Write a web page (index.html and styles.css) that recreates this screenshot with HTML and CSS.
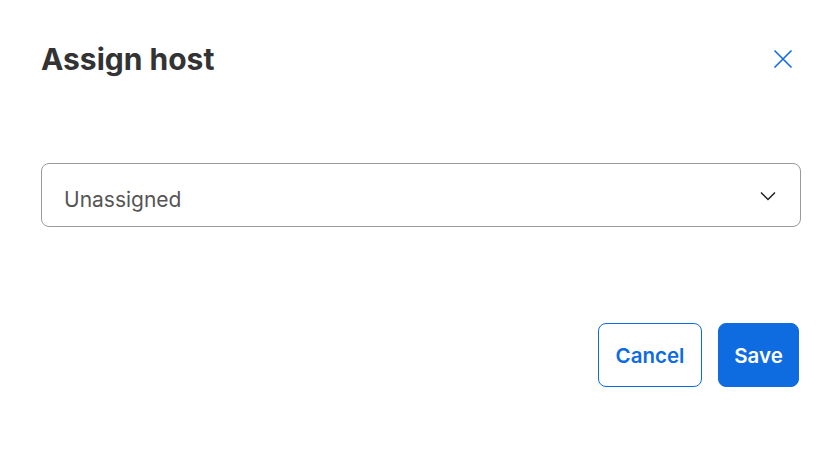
FILE: index.html
```html
<!DOCTYPE html>
<html lang="en">
<head>
    <meta charset="UTF-8">
    <meta name="viewport" content="width=device-width, initial-scale=1.0">
    <title>Assign host</title>
    <link rel="stylesheet" href="styles.css">
</head>
<body>
    <div class="dialog">
        <div class="dialog-header">
            <h2 class="dialog-title">Assign host</h2>
            <button class="close-btn" aria-label="Close">
                <svg width="20" height="20" viewBox="0 0 20 20">
                    <path d="M1.5 1.5 L18.5 18.5 M18.5 1.5 L1.5 18.5" stroke="#0e6be0" stroke-width="1.6" fill="none"/>
                </svg>
            </button>
        </div>

        <div class="select">
            <span class="select-value">Unassigned</span>
            <svg class="chevron" width="16" height="10" viewBox="0 0 16 10">
                <path d="M1 1.5 L8 8.5 L15 1.5" stroke="#222" stroke-width="1.5" fill="none"/>
            </svg>
        </div>

        <div class="dialog-footer">
            <button class="btn btn-outline">Cancel</button>
            <button class="btn btn-primary">Save</button>
        </div>
    </div>
</body>
</html>
```

FILE: styles.css
```css
body {
    margin: 0;
    background-color: #fff;
    font-family: Inter, "Noto Sans", sans-serif;
}

.dialog {
    padding: 38px 33px 0 41px;
}

.dialog-header {
    display: flex;
    justify-content: space-between;
    align-items: center;
}

.dialog-title {
    margin: 0;
    font-size: 30px;
    line-height: 42px;
    font-weight: 700;
    color: #333;
}

.close-btn {
    background: none;
    border: none;
    padding: 0;
    margin-right: 8px;
    width: 20px;
    height: 20px;
    cursor: pointer;
}

.close-btn svg {
    display: block;
}

.select {
    margin-top: 83px;
    height: 62px;
    border: 1px solid #9a9a9a;
    border-radius: 8px;
    display: flex;
    align-items: center;
    justify-content: space-between;
    padding: 0 24px 0 22px;
}

.select-value {
    font-size: 21px;
    color: #555;
    padding-top: 8px;
}

.chevron {
    display: block;
    margin-top: 2px;
}

.dialog-footer {
    margin-top: 96px;
    display: flex;
    justify-content: flex-end;
    gap: 16px;
    padding-right: 2px;
}

.btn {
    height: 64px;
    padding: 0;
    font-family: Inter, "Noto Sans", sans-serif;
    font-size: 20.5px;
    font-weight: 600;
    border-radius: 8px;
    cursor: pointer;
}

.btn-outline {
    width: 104px;
    background-color: #fff;
    color: #0e6be0;
    border: 1px solid #0e6be0;
}

.btn-primary {
    width: 81px;
    background-color: #0e6be0;
    color: #fff;
    border: 1px solid #0e6be0;
}
```
